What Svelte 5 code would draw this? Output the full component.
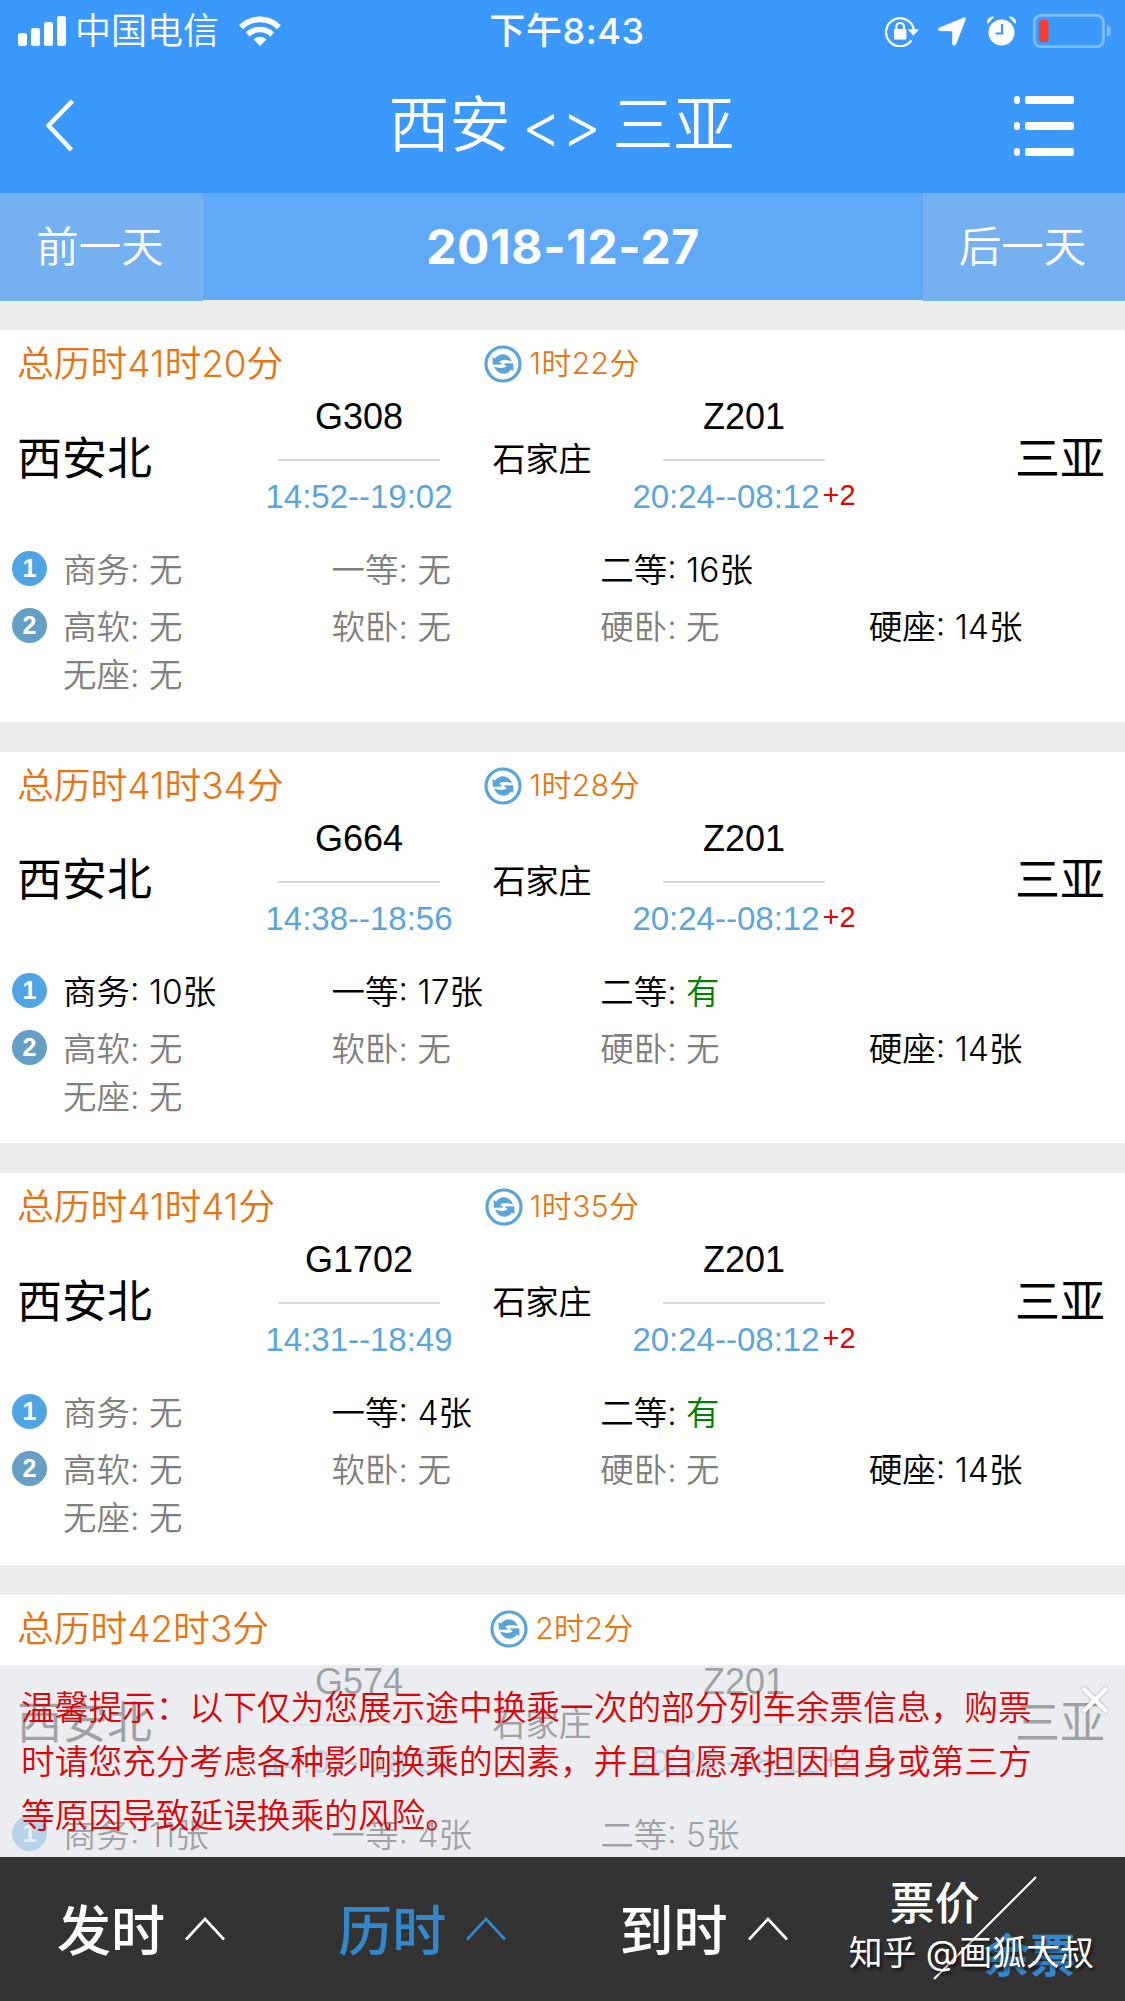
<script>
  const trips = [
    {
      total: '41时20分', wait: '1时22分', from: '西安北', via: '石家庄', to: '三亚',
      first: { no: 'G308', time: '14:52--19:02' },
      second: { no: 'Z201', time: '20:24--08:12', plus: '+2' },
      seats: [
        [['商务', '无'], ['一等', '无'], ['二等', '16张']],
        [['高软', '无'], ['软卧', '无'], ['硬卧', '无'], ['硬座', '14张'], ['无座', '无']]
      ]
    },
    {
      total: '41时34分', wait: '1时28分', from: '西安北', via: '石家庄', to: '三亚',
      first: { no: 'G664', time: '14:38--18:56' },
      second: { no: 'Z201', time: '20:24--08:12', plus: '+2' },
      seats: [
        [['商务', '10张'], ['一等', '17张'], ['二等', '有']],
        [['高软', '无'], ['软卧', '无'], ['硬卧', '无'], ['硬座', '14张'], ['无座', '无']]
      ]
    },
    {
      total: '41时41分', wait: '1时35分', from: '西安北', via: '石家庄', to: '三亚',
      first: { no: 'G1702', time: '14:31--18:49' },
      second: { no: 'Z201', time: '20:24--08:12', plus: '+2' },
      seats: [
        [['商务', '无'], ['一等', '4张'], ['二等', '有']],
        [['高软', '无'], ['软卧', '无'], ['硬卧', '无'], ['硬座', '14张'], ['无座', '无']]
      ]
    },
    {
      total: '42时3分', wait: '2时2分', from: '西安北', via: '石家庄', to: '三亚',
      first: { no: 'G574', time: '14:07--18:22' },
      second: { no: 'Z201', time: '20:24--08:12', plus: '+2' },
      seats: [
        [['商务', '11张'], ['一等', '4张'], ['二等', '5张']]
      ]
    }
  ];

  const tabs = ['发时', '历时', '到时'];
  let sortBy = $state('历时');
  let showTip = $state(true);

  function seatClass(value) {
    if (value === '无') return 'none';
    return value === '有' ? 'plenty' : '';
  }
</script>

<div class="app">
  <div class="status">
    <div class="left">
      <svg class="signal" viewBox="0 0 48 30" fill="#fff">
        <rect x="0" y="17" width="9" height="13" rx="2.5" />
        <rect x="13" y="12" width="9" height="18" rx="2.5" />
        <rect x="26" y="6" width="9" height="24" rx="2.5" />
        <rect x="39" y="0" width="9" height="30" rx="2.5" />
      </svg>
      <span class="carrier">中国电信</span>
      <svg class="wifi" viewBox="0 0 42 30" fill="none" stroke="#fff" stroke-width="5.6">
        <path d="M2 11.2a27 27 0 0 1 38 0" />
        <path d="M8.8 18.4a17.5 17.5 0 0 1 24.4 0" />
        <path d="M21 30l-6.4-6.6a9.2 9.2 0 0 1 12.8 0z" fill="#fff" stroke="none" />
      </svg>
    </div>
    <span class="clock">下午8:43</span>
    <div class="right">
      <svg class="lock" viewBox="0 0 34 32" fill="none" stroke="#fff" stroke-width="2.2">
        <path d="M26.4 25.4A14 14 0 1 1 28.9 15" />
        <path d="M22.800 14.200h11.200l-5.600 6.600z" fill="#fff" stroke="none" />
        <rect x="9" y="14" width="12.400" height="10.500" rx="1" fill="#fff" stroke="none" />
        <path d="M11.400 15v-3.200a3.800 3.800 0 0 1 7.600 0V15" />
      </svg>
      <svg class="arrow" viewBox="0 0 28 29" fill="#fff">
        <path d="M26 .4Q28.200 0 27.600 2.400L18.200 27.300Q16 30 14.200 27.300V15.200Q14 14.400 13.200 14.300L1.600 14Q-1 12.400 1 10.800Z" />
      </svg>
      <svg class="alarm" viewBox="0 0 29 30">
        <circle cx="14.500" cy="16.500" r="13" fill="#fff" />
        <path d="M.8 7.200Q-.6 1.500 6.600.9Zm27.400 0Q29.600 1.500 22.400.9Z" fill="#fff" stroke="#fff" stroke-linejoin="round" />
        <path d="M15 8v9.500H8.500" fill="none" stroke="#3b99fc" stroke-width="2.200" />
      </svg>
      <svg class="battery" viewBox="0 0 79 34">
        <rect x="1.400" y="1.400" width="69" height="31.200" rx="6.500" fill="none" stroke="#7fbcfd" stroke-width="2.800" />
        <rect x="6" y="6" width="9.500" height="22" rx="2.500" fill="#fb3b30" />
        <path d="M74 11q4 1.500 4 6t-4 6z" fill="#7fbcfd" />
      </svg>
    </div>
  </div>

  <header class="nav">
    <svg class="back" viewBox="0 0 30 54" fill="none" stroke="#fff" stroke-width="4.600" stroke-linejoin="round">
      <path d="M27.500 2L3.500 26.500L26.500 51" />
    </svg>
    <h1>西安 &lt;&gt; 三亚</h1>
    <svg class="menu" viewBox="0 0 60 60" fill="#fff">
      <rect x="0" y="0" width="6" height="8" rx="3" /><rect x="11" y="0" width="49" height="8" rx="2" />
      <rect x="0" y="26" width="6" height="8" rx="3" /><rect x="11" y="26" width="49" height="8" rx="2" />
      <rect x="0" y="52" width="6" height="8" rx="3" /><rect x="11" y="52" width="49" height="8" rx="2" />
    </svg>
  </header>

  <div class="days">
    <button class="day">前一天</button>
    <div class="date">2018-12-27</div>
    <button class="day">后一天</button>
  </div>

  <main class="list">
    {#each trips as trip (trip.total)}
      <section class="card">
        <div class="summary">
          <span class="total">总历时{trip.total}</span>
          <span class="wait">
            <svg viewBox="0 0 38 38">
              <circle cx="19" cy="19" r="17" fill="none" stroke="#5aa4da" stroke-width="3.200" />
              <g fill="#5aa4da">
                <path d="M8.500 12L8.800 19.800L18.500 19.400L15.300 16.500Q20.500 13.600 28 16.400Q24.800 8.400 16.600 9.400Q13 10.200 11 13.500Z" />
                <path d="M29.500 26L29.200 18.200L19.500 18.600L22.700 21.500Q17.500 24.400 10 21.600Q13.200 29.600 21.400 28.600Q25 27.800 27 24.500Z" />
              </g>
            </svg>
            <span>{trip.wait}</span>
          </span>
        </div>

        <div class="route">
          <span class="station">{trip.from}</span>
          <div class="leg">
            <span class="no">{trip.first.no}</span>
            <i class="rule"></i>
            <span class="time">{trip.first.time}</span>
          </div>
          <span class="via">{trip.via}</span>
          <div class="leg">
            <span class="no">{trip.second.no}</span>
            <i class="rule"></i>
            <span class="time">{trip.second.time}<em>{trip.second.plus}</em></span>
          </div>
          <span class="station end">{trip.to}</span>
        </div>

        {#each trip.seats as seats, i}
          <div class="seats" class:later={i === 1}>
            <span class="badge">{i + 1}</span>
            <div class="grid">
              {#each seats as [name, value]}
                <span class="seat {seatClass(value)}">{name}: <b>{value}</b></span>
              {/each}
            </div>
          </div>
        {/each}
      </section>
    {/each}
  </main>

  {#if showTip}
    <aside class="tip">
      <p>温馨提示：以下仅为您展示途中换乘一次的部分列车余票信息，购票时请您充分考虑各种影响换乘的因素，并且自愿承担因自身或第三方等原因导致延误换乘的风险。</p>
      <button class="close" aria-label="关闭" onclick={() => (showTip = false)}>
        <svg viewBox="0 0 30 30" fill="none" stroke="#fff" stroke-width="4.500">
          <path d="M3 3L27 27M27 3L3 27" />
        </svg>
      </button>
    </aside>
  {/if}

  <footer class="tabs">
    {#each tabs as tab}
      <button class="tab" class:active={sortBy === tab} onclick={() => (sortBy = tab)}>
        <span>{tab}</span>
        <svg viewBox="0 0 40 24" fill="none" stroke="currentColor" stroke-width="2.600">
          <path d="M1 22.500L20 2L39 22.500" />
        </svg>
      </button>
    {/each}
    <div class="filter">
      <span class="price">票价</span>
      <svg class="slash" viewBox="0 0 104 104" stroke="#fff" stroke-width="2.200">
        <path d="M1 103L103 1" />
      </svg>
      <span class="left-tickets">余票</span>
      <span class="mark">知乎 @画狐大叔</span>
    </div>
  </footer>
</div>

<style>
  :global(body) {
    background: #ededed;
  }

  .app {
    position: relative;
    display: flex;
    flex-direction: column;
    width: 1125px;
    height: 2001px;
    overflow: hidden;
    background: #ededed;
    color: #000;
    font-family: Inter, 'Noto Sans CJK SC', sans-serif;
    font-weight: 350;
  }

  button {
    margin: 0;
    padding: 0;
    border: 0;
    background: none;
    color: inherit;
    font: inherit;
  }

  svg {
    display: block;
    flex: none;
  }

  .status {
    flex: none;
    display: grid;
    grid-template-columns: 1fr auto 1fr;
    align-items: center;
    height: 60px;
    padding: 0 13px 0 18px;
    background: #3b99fc;
    color: #fff;
    font-size: 36px;
    line-height: 62px;
  }

  .left,
  .right {
    display: flex;
    align-items: center;
  }

  .right {
    justify-content: flex-end;
  }

  .signal {
    width: 48px;
    height: 30px;
  }

  .carrier {
    margin: 0 20px 0 9px;
  }

  .wifi {
    width: 42px;
    height: 30px;
  }

  .clock {
    padding-left: 4px;
    font-weight: 500;
    letter-spacing: 0.6px;
  }

  .lock {
    width: 34px;
    height: 32px;
    margin-right: 19px;
  }

  .arrow {
    width: 28px;
    height: 29px;
    margin-right: 21px;
  }

  .alarm {
    width: 29px;
    height: 30px;
    margin-right: 17px;
  }

  .battery {
    width: 79px;
    height: 34px;
  }

  .nav {
    flex: none;
    display: grid;
    grid-template-columns: 1fr auto 1fr;
    align-items: center;
    height: 133px;
    padding: 0 51px 2px 45px;
    box-sizing: border-box;
    background: #3b99fc;
    color: #fff;
  }

  .back {
    width: 30px;
    height: 54px;
  }

  .menu {
    justify-self: end;
    width: 60px;
    height: 60px;
  }

  h1 {
    margin: 0;
    padding-left: 4px;
    font-size: 61px;
    font-weight: 350;
    line-height: 131px;
    word-spacing: -6px;
  }

  .days {
    flex: none;
    display: grid;
    grid-template-columns: 203px 1fr 202px;
    height: 107px;
    background: #60a9f6;
    color: #fff;
    line-height: 107px;
    text-align: center;
  }

  .day {
    padding-right: 3px;
    background: #75b1f1;
    font-size: 42.5px;
    line-height: 108px;
  }

  .date {
    font-size: 48px;
    font-weight: 700;
    letter-spacing: 0.6px;
  }

  .list {
    flex: 1;
    min-height: 0;
    overflow: hidden;
    display: flex;
    flex-direction: column;
    gap: 30px;
    padding-top: 30px;
  }

  .card {
    flex: none;
    box-sizing: border-box;
    height: 391.5px;
    padding-top: 6px;
    background: #fff;
  }

  .summary {
    display: grid;
    grid-template-columns: 1fr auto 1fr;
    align-items: center;
    height: 54px;
    padding: 0 18px 0 17px;
    color: #e87410;
    line-height: 54px;
  }

  .total {
    font-size: 36.8px;
  }

  .wait {
    display: flex;
    align-items: center;
    gap: 7px;
    font-size: 30px;
    letter-spacing: 0.4px;
  }

  .wait svg {
    width: 38px;
    height: 38px;
  }

  .wait span {
    padding-bottom: 2px;
  }

  .route {
    display: grid;
    grid-template-columns: 240px 204px 162px 242px 1fr;
    align-items: center;
    height: 140px;
    padding: 0 20px 0 17px;
  }

  .station {
    padding-bottom: 10px;
    font-size: 45px;
    font-weight: 400;
  }

  .end {
    text-align: right;
  }

  .via {
    padding-bottom: 6px;
    font-size: 33px;
    font-weight: 400;
    text-align: center;
  }

  .leg {
    display: flex;
    flex-direction: column;
    align-items: center;
    padding-bottom: 6px;
    font-family: 'Liberation Sans', sans-serif;
    font-weight: 400;
  }

  .no {
    font-size: 36px;
    line-height: 40px;
  }

  .rule {
    width: 162px;
    height: 2px;
    margin: 22px 0 16px;
    background: #d9d9d9;
  }

  .time {
    color: #5aa5da;
    font-size: 33px;
    line-height: 40px;
    white-space: nowrap;
  }

  em {
    position: relative;
    top: -3px;
    margin-left: 3px;
    color: #dc0508;
    font-size: 29px;
    font-style: normal;
    line-height: 1;
  }

  .seats {
    display: flex;
    align-items: flex-start;
    padding: 15px 0 0 12px;
  }

  .badge {
    flex: none;
    box-sizing: border-box;
    width: 35px;
    height: 35px;
    margin: 6px 16px 0 0;
    border-radius: 50%;
    background: #4fa5e3;
    color: #fff;
    font: 700 25px/35px 'Liberation Sans', sans-serif;
    text-align: center;
  }

  .later {
    padding-top: 9px;
  }

  .later .badge {
    background: #659fc3;
  }

  .grid {
    display: grid;
    grid-template-columns: repeat(4, 268.6px);
    padding-top: 1px;
    margin-bottom: -1px;
  }

  .seat {
    font-size: 33.5px;
    line-height: 48px;
    white-space: nowrap;
  }

  .seat b {
    font-weight: inherit;
  }

  .none {
    color: #808080;
  }

  .plenty b {
    color: #008000;
  }

  .tip {
    position: absolute;
    top: 1665px;
    left: 0;
    display: flex;
    align-items: flex-start;
    gap: 50px;
    box-sizing: border-box;
    width: 1125px;
    height: 192px;
    padding: 14px 14px 0 21px;
    background: rgba(228, 229, 235, 0.7);
  }

  .tip p {
    width: 1012px;
    margin: 0;
    color: #dc0508;
    font-family: 'Noto Sans CJK SC', sans-serif;
    font-size: 33.7px;
    line-height: 54px;
  }

  .close {
    margin-top: 6px;
    margin-left: -3px;
  }

  .close svg {
    width: 30px;
    height: 30px;
    filter: drop-shadow(0 0 1px rgba(0, 0, 0, 0.35));
  }

  .tabs {
    flex: none;
    display: grid;
    grid-template-columns: repeat(4, 1fr);
    height: 144px;
    background: #333;
    color: #fff;
  }

  .tab {
    display: flex;
    align-items: center;
    gap: 20px;
    padding: 0 0 0 57px;
    font-size: 54px;
    font-weight: 500;
  }

  .tab span {
    padding-bottom: 3px;
  }

  .tab svg {
    width: 40px;
    height: 24px;
  }

  .active {
    color: #3388cc;
  }

  .filter {
    position: relative;
    font-weight: 500;
    line-height: 54px;
  }

  .price,
  .left-tickets,
  .mark,
  .slash {
    position: absolute;
    white-space: nowrap;
  }

  .price {
    left: 46px;
    top: 20px;
    font-size: 45px;
  }

  .left-tickets {
    left: 140px;
    top: 71px;
    color: #3388cc;
    font-size: 46px;
    font-weight: 700;
  }

  .slash {
    left: 89px;
    top: 19px;
    width: 104px;
    height: 104px;
  }

  .mark {
    left: 5px;
    top: 69px;
    font-size: 33.8px;
    font-weight: 400;
    text-shadow: 2px 3px 3px rgba(0, 0, 0, 0.6);
  }
</style>
